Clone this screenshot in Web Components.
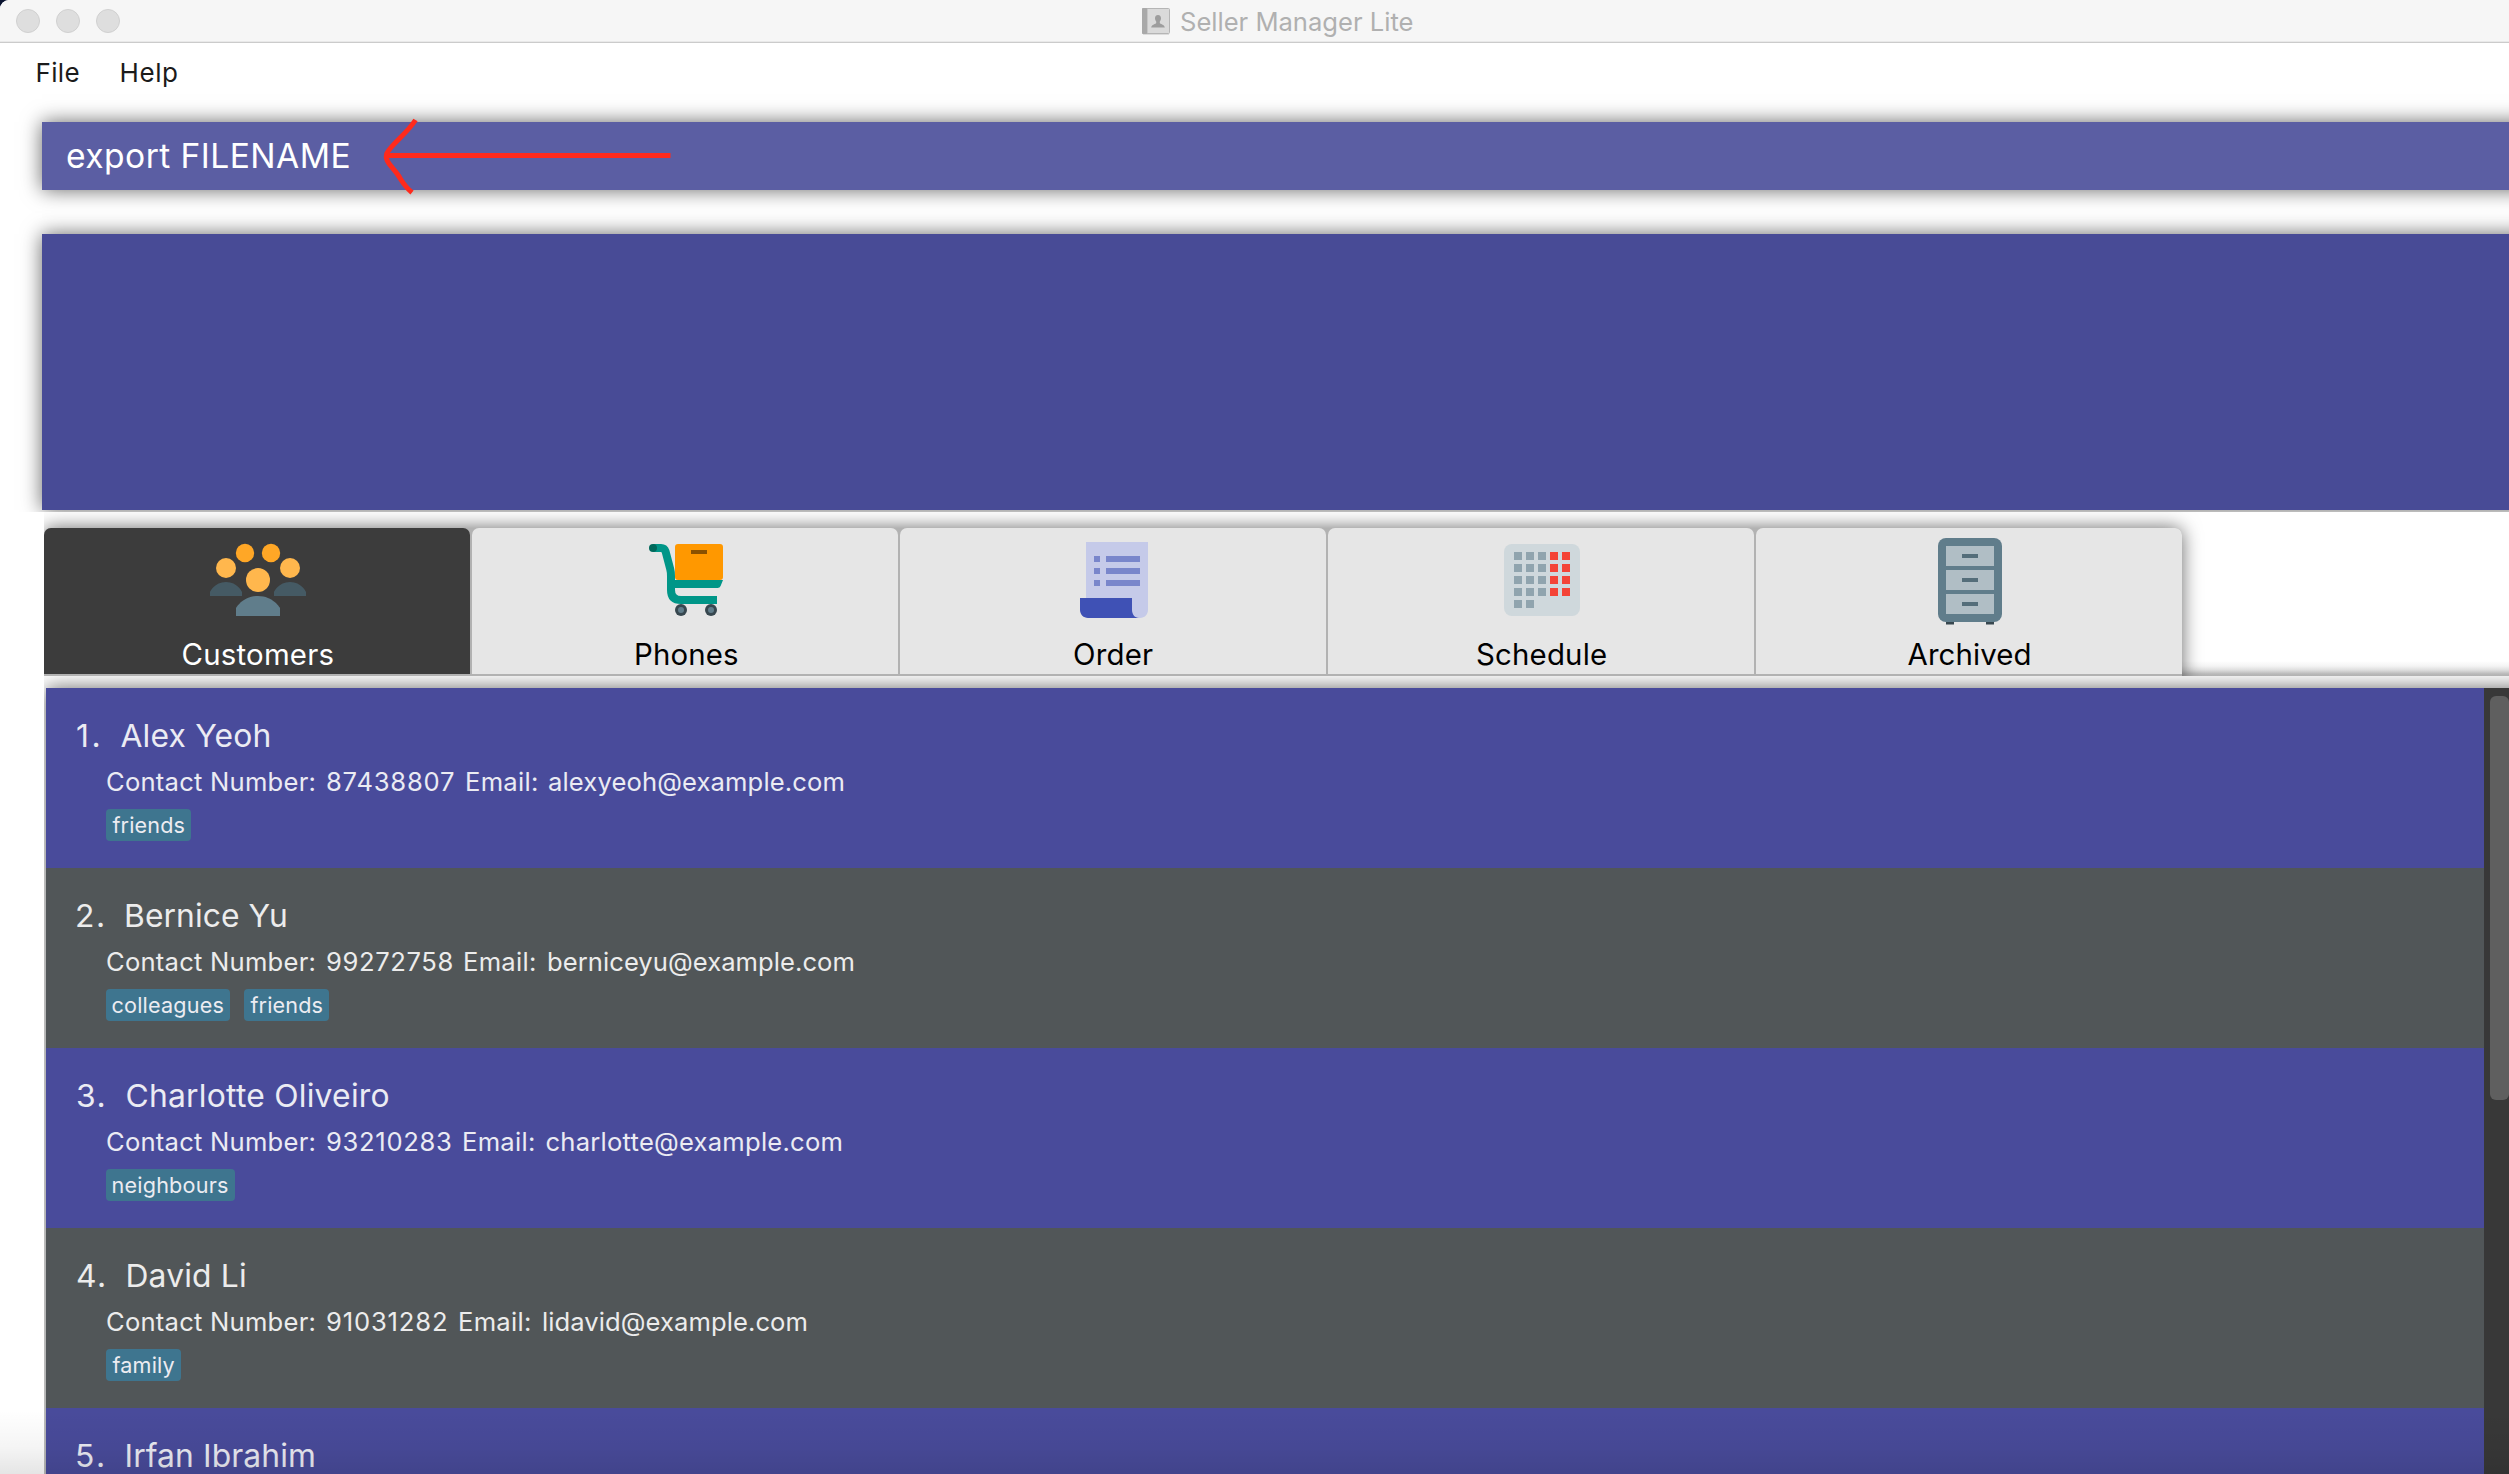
<!DOCTYPE html>
<html lang="en">
<head>
<meta charset="utf-8">
<title>Seller Manager Lite</title>
<style>
html,body{margin:0;height:100%;overflow:hidden;background:#0b1430}
body{font-family:Inter,"Liberation Sans",sans-serif}
</style>
</head>
<body>
<seller-app></seller-app>
<script>
const define = (name, cls) => customElements.define(name, cls);
const ctx = document.createElement('canvas').getContext('2d');

class Base extends HTMLElement {
  connectedCallback() {
    if (this.shadowRoot) return;
    this.attachShadow({ mode: 'open' }).innerHTML = this.render();
  }
}

/* A single line of text tracked so that its ink spans exactly `w` pixels. */
define('fit-text', class extends HTMLElement {
  connectedCallback() {
    if (this.shadowRoot) return;
    const text = this.getAttribute('text'), w = +this.getAttribute('w'), size = +this.getAttribute('size');
    ctx.font = `400 ${size}px Inter, "Liberation Sans", sans-serif`;
    const m = ctx.measureText(text);
    const ink = m.actualBoundingBoxRight + m.actualBoundingBoxLeft;
    const track = (w - ink) / Math.max(1, text.length - 1);
    this.attachShadow({ mode: 'open' }).innerHTML = `<style>
      :host{display:block;flex:none;width:${w}px;white-space:pre;font-size:${size}px}
      span{display:block;margin-left:${m.actualBoundingBoxLeft}px;letter-spacing:${track}px;font-kerning:normal;width:max-content}
    </style><span>${text}</span>`;
  }
});
const fit = (text, w, size, style = '') => `<fit-text text="${text}" w="${w}" size="${size}" style="${style}"></fit-text>`;

define('title-bar', class extends Base {
  render() {
    return `<style>
      :host{display:flex;height:43px;box-sizing:border-box;background:#f6f6f6;border-bottom:1px solid #cbcbcb;box-shadow:inset 0 -1px #e9e9e9;align-items:center}
      .lights{display:flex;gap:16px;padding-left:16px;width:1126px;box-sizing:border-box}
      i{width:24px;height:24px;box-sizing:border-box;border-radius:50%;background:#dedede;border:1px solid #d0d0d0}
      svg{flex:none;margin-left:16px;width:28px;height:27px;margin-right:11px}
      fit-text{line-height:42px;color:#b0b0b0;padding-top:2px}
    </style>
    <div class="lights"><i></i><i></i><i></i></div>
    <svg viewBox="0 0 28 27"><rect x=".5" y=".5" width="27" height="25" rx="1" fill="#dadada" stroke="#b5b5b5"/><rect x="0" y="0" width="5" height="26" rx="1" fill="#a9a9a9"/><path d="M5.5 1v24" stroke="#c6c6c6"/><path d="M16 7c2 0 3.200 1.500 3 3.600-.1 1.400-.7 2.400-1.200 3v1.400c0 1 4.700 1.300 5 4.500H9.200c.3-3.200 5-3.500 5-4.500v-1.400c-.5-.6-1.100-1.600-1.200-3C12.800 8.500 14 7 16 7z" fill="#9d9d9d"/><path d="M1 26.500h26" stroke="#dcdcdc"/></svg>
    ${fit('Seller Manager Lite', 231.5, 25.6)}`;
  }
});

define('menu-bar', class extends Base {
  render() {
    return `<style>
      :host{display:flex;height:79px;box-sizing:border-box;padding:10px 0 0 37.500px;gap:43px;line-height:40px;color:#1b1b1b}
    </style>${fit('File', 41, 26)}${fit('Help', 55.5, 26)}`;
  }
});

define('command-box', class extends Base {
  render() {
    return `<style>
      :host{display:flex;position:relative;height:68px;flex:none;margin:0 -30px 0 42px;box-sizing:border-box;padding-left:25px;background:#5b5ea3;color:#fff;line-height:68px;box-shadow:0 0 19px rgba(0,0,0,.6)}
      svg{position:absolute;left:338px;top:-8px;width:300px;height:86px;overflow:visible}
    </style>${fit('export FILENAME', 281.5, 33.6)}
    <svg viewBox="380 114 300 86" fill="none" stroke="#ff2a1c" stroke-width="5"><path d="M387 155.500H670.500"/><path d="M415.500 120C411 127 405 133 400 138C394 144 389 149 387 153Q385.500 157 387 160C389 165 394 169 398 175C402 181 404 186 412 192.500"/></svg>`;
  }
});

define('result-panel', class extends Base {
  render() {
    return `<style>
      :host{display:block;height:322px;flex:none;overflow:hidden;box-sizing:border-box;padding:44px 0 0 42px;clip-path:inset(20px 0 0 0)}
      div{height:276px;margin-right:-30px;background:#484b96;box-shadow:0 0 19px rgba(0,0,0,.6)}
    </style><div></div>`;
  }
});

const icons = {
  customers: `<g fill="#ffa726"><circle cx="17.500" cy="10.500" r="4.600"/><circle cx="30.500" cy="10.500" r="4.600"/></g><g fill="#ffb74d"><circle cx="8" cy="18" r="5"/><circle cx="40" cy="18" r="5"/><circle cx="24" cy="24" r="6"/></g><path fill="#455a64" d="M16 32H0v-2s2.200-5 8-5 8 5 8 5zM48 32H32v-2s2.200-5 8-5 8 5 8 5z"/><path fill="#607d8b" d="M35 42H13v-4s3.400-6 11-6 11 6 11 6z"/>`,
  phones: `<path d="M8 8H12Q13.700 8 14.300 9.800L16.600 18.500Q17 20 17 22V29Q17 34 22 34H40" fill="none" stroke="#009688" stroke-width="4"/><circle cx="8" cy="8" r="2" fill="#00695c"/><path fill="#009688" d="M18 24H43l-1.200 3Q41.400 28 40.300 28H18z"/><rect x="19" y="6" width="24" height="18" rx="1.500" fill="#ff9800"/><rect x="27" y="9" width="8" height="2" fill="#8a5100"/><g fill="#37474f"><circle cx="22" cy="39" r="3"/><circle cx="37" cy="39" r="3"/></g><g fill="#607d8b"><circle cx="22" cy="39" r="1.500"/><circle cx="37" cy="39" r="1.500"/></g>`,
  order: `<path fill="#c5cae9" d="M11 5h31v34c0 2.200-1.800 4-4 4H15l-4-9z"/><path fill="#3f51b5" d="M34 39v-6H8v6c0 2.200 1.800 4 4 4h25.500c-2 0-3.500-1.800-3.500-4z"/><path fill="#7986cb" d="M15 12h3v3h-3zM21 12h17v3H21zM15 18h3v3h-3zM21 18h17v3H21zM15 24h3v3h-3zM21 24h17v3H21z"/>`,
  schedule: (() => {
    let s = '<rect x="5" y="6" width="38" height="36" rx="4" fill="#cfd8dc"/>';
    for (let r = 0; r < 5; r++) for (let c = 0; c < (r === 4 ? 2 : 5); c++)
      s += `<rect x="${10 + 6 * c}" y="${10 + 6 * r}" width="4" height="4" fill="${c > 2 ? '#f44336' : '#90a4ae'}"/>`;
    return s;
  })(),
  archived: `<path fill="#37474f" d="M12 44h4v2.200h-4zM32 44h4v2.200h-4z"/><rect x="8" y="3" width="32" height="42" rx="4" fill="#607d8b"/><path fill="#b0bec5" d="M12 7h24v10H12zM12 19h24v10H12zM12 31h24v10H12z"/><path fill="#546e7a" d="M20 11h8v2h-8zM20 23h8v2h-8zM20 35h8v2h-8z"/>`
};

define('nav-tab', class extends Base {
  render() {
    const a = k => this.getAttribute(k);
    return `<style>
      :host{display:flex;flex-direction:column;width:426px;height:146px;flex:none;box-sizing:border-box;padding-top:4px;border-radius:7px 7px 0 0;background:#e6e6e6;color:#000}
      :host([active]){background:#3c3c3c;color:#fff}
      svg{width:96px;height:96px;flex:none;margin-left:${a('ix')}px}
      fit-text{line-height:40px;margin:7px 0 0 ${a('tx')}px}
    </style><svg viewBox="0 0 48 48">${icons[a('icon')]}</svg>${fit(a('label'), a('tw'), 29.4)}`;
  }
});

define('tab-header', class extends Base {
  render() {
    return `<style>
      :host{display:flex;align-items:flex-start;height:164px;flex:none;box-sizing:border-box;margin-left:44px;padding-top:16px;overflow:hidden;background:linear-gradient(to top,#b2b2b2 0,#b8b8b8 2px,#dedede 6px,#f4f4f4 10px,#fff 15px)}
      .tabs{display:flex;gap:2px;height:160px;background:#b2b2b2;border-radius:7px;box-shadow:0 0 19px rgba(0,0,0,.6)}
    </style><div class="tabs">
    <nav-tab active icon="customers" label="Customers" ix="166" tx="138.500" tw="151"></nav-tab>
    <nav-tab icon="phones" label="Phones" ix="165" tx="164" tw="102"></nav-tab>
    <nav-tab icon="order" label="Order" ix="164" tx="174" tw="79"></nav-tab>
    <nav-tab icon="schedule" label="Schedule" ix="166" tx="149" tw="129"></nav-tab>
    <nav-tab icon="archived" label="Archived" ix="166" tx="151.500" tw="122"></nav-tab></div>`;
  }
});

define('tag-chip', class extends Base {
  render() {
    return `<style>
      :host{display:block;height:32px;width:${this.getAttribute('bw')}px;box-sizing:border-box;padding-left:6.500px;border-radius:4px;background:#3e758f;line-height:32px;color:#ececf2}
    </style>${fit(this.getAttribute('label'), this.getAttribute('tw'), 21.6)}`;
  }
});

define('customer-card', class extends Base {
  render() {
    const c = customers[+this.getAttribute('index')];
    const [nl, nr] = c.name;
    let details = '';
    if (c.phone) {
      const [pw, ex, ew, mx, mw] = c.x;
      details = `<div class="line">${fit('Contact Number:', 207.5, 25.6)}${fit(c.phone, pw, 25.6, 'margin-left:12.5px')}${fit('Email:', ew, 25.6, `margin-left:${ex - 327 - pw}px`)}${fit(c.email, mw, 25.6, `margin-left:${mx - ex - ew}px`)}</div>
      <div class="tags">${c.tags.map(t => `<tag-chip label="${t[0]}" bw="${t[1]}" tw="${t[2]}"></tag-chip>`).join('')}</div>`;
    }
    return `<style>
      :host{display:block;height:180px;flex:none;box-sizing:border-box;padding-top:27px;background:#494b9b;color:#ebebf3}
      :host([odd]){background:#515658;color:#ececec}
      .name{display:flex;padding-left:31px;line-height:42px}
      .line{display:flex;padding-left:61px;line-height:36px;margin-top:6.500px}
      .tags{display:flex;gap:14px;padding-left:60px;margin-top:9.500px}
    </style>
    <div class="name">${fit(c.n, c.nw, 31.8)}${fit(c.label, nr - nl, 31.8, `margin-left:${nl - 77 - c.nw}px`)}</div>${details}`;
  }
});
const customers = [
  { n: '1.', nw: 21.5, label: 'Alex Yeoh', name: [120.5, 269.5], phone: '87438807', email: 'alexyeoh@example.com', x: [127, 467, 70, 549, 294.5], tags: [['friends', 85, 72]] },
  { n: '2.', nw: 26, label: 'Bernice Yu', name: [126, 286], phone: '99272758', email: 'berniceyu@example.com', x: [125.5, 465, 70, 548, 305.5], tags: [['colleagues', 124, 111], ['friends', 85, 72]] },
  { n: '3.', nw: 26.5, label: 'Charlotte Oliveiro', name: [126.5, 388.5], phone: '93210283', email: 'charlotte@example.com', x: [124, 464, 70, 546.5, 295], tags: [['neighbours', 129, 115.5]] },
  { n: '4.', nw: 27, label: 'David Li', name: [127.5, 245], phone: '91031282', email: 'lidavid@example.com', x: [119, 460, 70, 543, 263.5], tags: [['family', 75, 62]] },
  { n: '5.', nw: 26, label: 'Irfan Ibrahim', name: [126.5, 314] }
];

define('customer-list', class extends Base {
  render() {
    return `<style>
      :host{display:block;flex:1;min-height:0;margin-left:44px;padding:12px 0 0 2px;overflow:hidden}
      .frame{display:flex;height:840px;margin-right:-30px;padding-right:30px;box-shadow:0 0 19px rgba(0,0,0,.6)}
      .rows{flex:1;display:flex;flex-direction:column}
      .bar{width:25px;box-sizing:border-box;background:#383838;padding:8px 0 0 6px}
      .thumb{width:19px;height:404px;border-radius:6px;background:#5f5f5f}
    </style>
    <div class="frame"><div class="rows">${customers.map((c, i) => `<customer-card index="${i}" ${i % 2 ? 'odd' : ''}></customer-card>`).join('')}</div><div class="bar"><div class="thumb"></div></div></div>`;
  }
});

define('seller-app', class extends Base {
  render() {
    return `<style>
      :host{display:flex;flex-direction:column;position:relative;width:100vw;height:100vh;overflow:hidden;background:#fff;border-top-left-radius:9px}
      .shade{position:absolute;left:0;right:0;bottom:0;height:64px;background:linear-gradient(to top,rgba(0,0,0,.1),rgba(0,0,0,.045) 40%,transparent);pointer-events:none}
      title-bar,menu-bar{flex:none}
    </style>
    <title-bar></title-bar><menu-bar></menu-bar><command-box></command-box><result-panel></result-panel>
    <tab-header></tab-header><customer-list></customer-list><div class="shade"></div>`;
  }
});
</script>
</body>
</html>
